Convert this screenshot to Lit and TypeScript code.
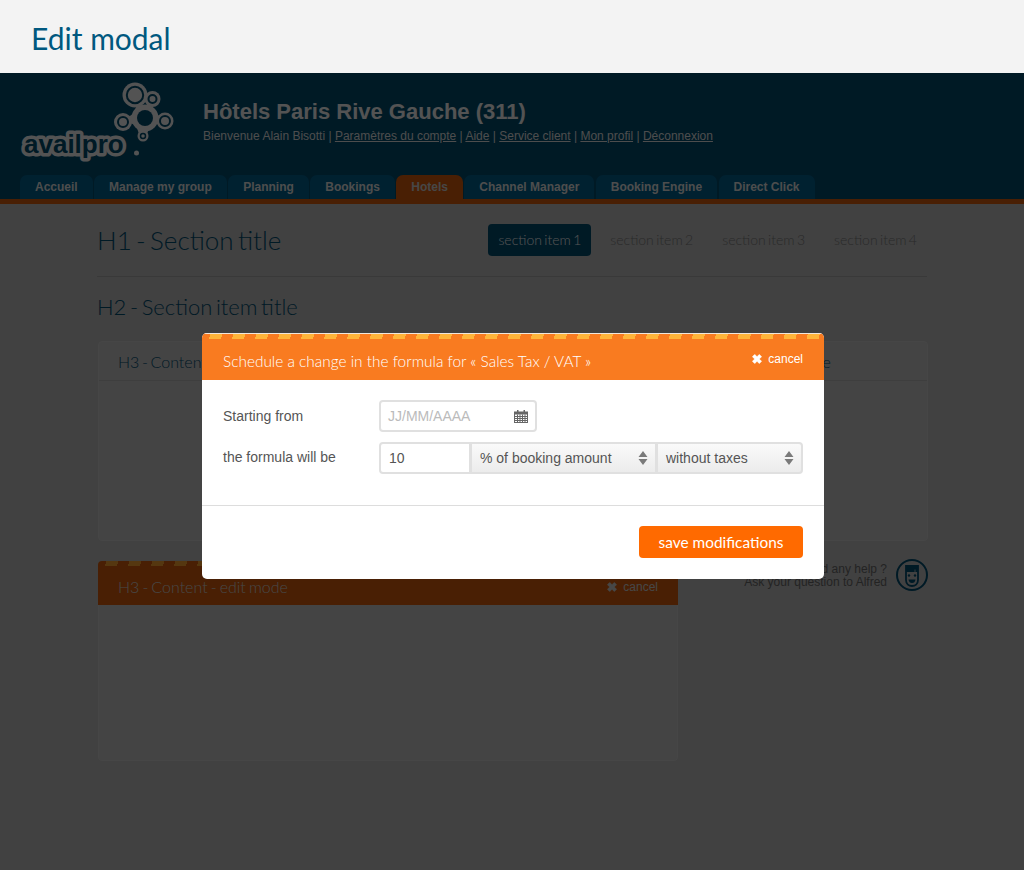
import { LitElement, html, css } from "lit";
import { customElement } from "lit/decorators.js";

const tabs = ["Accueil", "Manage my group", "Planning", "Bookings", "Hotels", "Channel Manager", "Booking Engine", "Direct Click"];
const links = ["Paramètres du compte", "Aide", "Service client", "Mon profil", "Déconnexion"];

const xIcon = html`<svg class="x" viewBox="0.6 0.6 8.8 8.8" aria-hidden="true"><path d="M1 3 3 1 5 3 7 1 9 3 7 5 9 7 7 9 5 7 3 9 1 7 3 5Z" fill="currentColor" stroke="currentColor" stroke-width=".6" stroke-linejoin="round"/></svg>`;

const updown = html`<svg class="updown" viewBox="0 0 10 14" aria-hidden="true"><path d="M5 0 9.500 6H.5ZM5 14 .5 8h9Z" fill="#7a7a7a"/></svg>`;

@customElement("app-root")
export class AppRoot extends LitElement {
  static styles = css`
    :host { display: block; width: 1024px; height: 870px; overflow: hidden; font-family: "Liberation Sans", Arial, sans-serif; background: #bababa; }
    .band { height: 73px; background: #f3f3f3; display: flex; align-items: center; padding-left: 31px; box-sizing: border-box; }
    .band h1 { margin: 0; font: 400 30px/1 Lato, sans-serif; color: #00587f; position: relative; top: 1px; }
    .page { position: relative; height: 797px; }
    .overlay { position: absolute; inset: 0; background: rgba(0,0,0,.65); }

    .top { height: 126px; background: #004a6c; border-bottom: 5px solid #d05a0c; display: flex; flex-direction: column; }
    .brand { flex: 1; display: flex; align-items: flex-start; }
    .logo { width: 203px; height: 100px; flex: none; }
    .logo text { font: 700 26px "Liberation Sans", sans-serif; fill: #004a6c; stroke: #eee; stroke-width: 7px; paint-order: stroke; stroke-linejoin: round; }
    .hotel { padding-top: 25px; }
    .hotel h2 { margin: 0; font: 700 22px/28px "Liberation Sans", sans-serif; color: #eee; }
    .hotel p { margin: 2px 0 0; font-size: 12px; line-height: 16px; color: #ddd; }
    .hotel a { color: #ddd; text-decoration: underline; }
    .tabs { display: flex; gap: 1.4px; padding-left: 20px; height: 24px; }
    .tab { padding: 0 15px; background: #005f8a; color: #ddd; font-size: 12px; font-weight: 700; line-height: 24px; border-radius: 7px 7px 0 0; }
    .tab.on { background: #d05a0c; color: #ccc; }

    .content { padding: 0 97px; }
    .head { display: flex; align-items: center; justify-content: space-between; height: 73px; padding-bottom: 1px; border-bottom: 1px solid #a4a4a4; box-sizing: border-box; }
    .head h1 { margin: 0; font: 300 26px/1 Lato, sans-serif; word-spacing: -2.7px; color: #004a6c; }
    .snav { display: flex; gap: 9px; }
    .snav span { font: 300 14px/32px Lato, sans-serif; word-spacing: -1.4px; padding: 0 10px; height: 32px; color: #787878; border-radius: 4px; }
    .snav span.on { background: #004a6c; color: #eee; }
    .h2 { margin: 15px 0 0; font: 300 22px/30px Lato, sans-serif; word-spacing: -2.4px; color: #004a6c; }

    .grid { display: grid; grid-template-columns: 580px 230px; column-gap: 20px; margin-top: 19px; padding-left: 1px; }
    .col { display: flex; flex-direction: column; gap: 20px; }
    .card { height: 200px; border: 1px solid #c8c8c8; border-radius: 4px; box-sizing: border-box; background: #c2c2c2; }
    .card .ct { height: 39px; border-bottom: 1px solid #b2b2b2; padding-left: 19px; font: 300 16px/40px Lato, sans-serif; word-spacing: -1.7px; color: #004a6c; box-sizing: border-box; }
    .edit { height: 200px; display: flex; flex-direction: column; border-radius: 4px; overflow: hidden; }
    .ebody { flex: 1; background: #c2c2c2; border: 1px solid #c8c8c8; border-top: 0; border-radius: 0 0 4px 4px; }
    .ehead { height: 44px; flex: none; background: #d05a0c; position: relative; display: flex; align-items: center; justify-content: space-between; padding: 7px 20px 0; box-sizing: border-box; color: #ccc; font: 300 16px Lato, sans-serif; word-spacing: -1.3px; }
    .stripes { position: absolute; left: 0; right: 0; top: 0; height: 5px; background: repeating-linear-gradient(105deg, transparent 0 8px, #ffb53a 8px 19.6px, transparent 19.6px 22.2px); }
    .ehead .stripes { opacity: .75; }
    .cancel { display: flex; align-items: center; gap: 6px; font: 400 12px "Liberation Sans", sans-serif; word-spacing: 0; }
    .x { width: 10px; height: 10px; }
    .help { display: flex; justify-content: flex-end; align-items: center; gap: 9px; font-size: 12px; line-height: 13px; color: #666; text-align: right; }
    .help svg { width: 32px; height: 32px; flex: none; margin-top: -2px; }

    .modal { position: absolute; left: 202px; top: 260px; width: 622px; height: 246px; background: #fff; border-radius: 5px; overflow: hidden; color: #555; display: flex; flex-direction: column; }
    .mhead { height: 47px; background: #f97b20; border-top: 1px solid #f0e6dc; position: relative; display: flex; align-items: center; justify-content: space-between; padding: 7px 21px 0; box-sizing: border-box; color: #fff; }
    .mhead h3 { margin: 0; font: 300 15.4px Lato, sans-serif; }
    .mhead .cancel { position: relative; top: -2px; }
    .mbody { padding: 20px 21px 0; height: 126px; box-sizing: border-box; border-bottom: 1px solid #ddd; display: flex; flex-direction: column; gap: 10px; }
    .row { display: flex; align-items: center; height: 32px; font-size: 14px; }
    .row label { width: 156px; flex: none; }
    .row + .row label { position: relative; top: -1px; }
    .ctrl { display: flex; height: 32px; border: 2px solid #e0e0e0; box-sizing: border-box; border-radius: 4px; align-items: center; background: #fff; color: #555; }
    .date { width: 158px; justify-content: space-between; padding: 0 7px; color: #bbb; }
    .date svg { width: 14px; height: 14px; }
    .group { display: flex; }
    .group .ctrl { border-radius: 0; margin-left: -1px; }
    .num { width: 92px; padding-left: 8px; border-radius: 4px 0 0 4px !important; margin-left: 0 !important; }
    .sel { padding: 0 7px 0 8px; justify-content: space-between; background: linear-gradient(#fafafa, #ececec); }
    .s1 { width: 187px; }
    .s2 { width: 147px; border-radius: 0 4px 4px 0 !important; }
    .updown { width: 10px; height: 14px; }
    .mfoot { flex: 1; display: flex; justify-content: flex-end; padding: 20px 21px 0; }
    .save { width: 164px; height: 32px; border: 0; border-radius: 4px; background: #ff6a00; color: #fff; font: 400 15.4px Lato, sans-serif; padding: 0; }
  `;

  render() {
    return html`
      <div class="band"><h1>Edit modal</h1></div>
      <div class="page">
        <div class="top">
          <div class="brand">
            <svg class="logo" viewBox="0 0 203 100" aria-hidden="true">
              <path d="M137 32 148 35 165 47 150 52 146 64 140 64 136 52 123 48 134 40Z" fill="#eee"/>
              <circle cx="135" cy="22" r="12.500" fill="#eee"/>
              <circle cx="135" cy="22" r="8.200" fill="none" stroke="#004a6c" stroke-width="2"/>
              <circle cx="152.500" cy="26" r="8" fill="#eee"/>
              <circle cx="152.500" cy="26" r="4" fill="none" stroke="#004a6c" stroke-width="2"/>
              <circle cx="123" cy="49" r="9" fill="#eee"/>
              <circle cx="123" cy="49" r="5" fill="none" stroke="#004a6c" stroke-width="2"/>
              <circle cx="165" cy="48" r="8.500" fill="#eee"/>
              <circle cx="165" cy="48" r="5" fill="none" stroke="#004a6c" stroke-width="2"/>
              <circle cx="143" cy="63" r="5.500" fill="#eee"/>
              <circle cx="143" cy="63" r="2.500" fill="none" stroke="#004a6c" stroke-width="1.500"/>
              <circle cx="145" cy="45" r="13.500" fill="#eee"/>
              <circle cx="145" cy="45" r="8" fill="#004a6c"/>
              <circle cx="136.500" cy="80" r="2.500" fill="#eee"/>
              <text x="24" y="80">availpro</text>
            </svg>
            <div class="hotel">
              <h2>Hôtels Paris Rive Gauche (311)</h2>
              <p>Bienvenue Alain Bisotti | ${links.map((l, i) => html`<a>${l}</a>${i < links.length - 1 ? " | " : ""}`)}</p>
            </div>
          </div>
          <div class="tabs">
            ${tabs.map((t) => html`<div class="tab ${t === "Hotels" ? "on" : ""}">${t}</div>`)}
          </div>
        </div>
        <div class="content">
          <div class="head">
            <h1>H1 - Section title</h1>
            <div class="snav">
              <span class="on">section item 1</span><span>section item 2</span><span>section item 3</span><span>section item 4</span>
            </div>
          </div>
          <div class="h2">H2 - Section item title</div>
          <div class="grid">
            <div class="col">
              <div class="card"><div class="ct">H3 - Content</div></div>
              <div class="edit">
                <div class="ehead"><div class="stripes"></div><span>H3 - Content - edit mode</span><span class="cancel">${xIcon}cancel</span></div>
                <div class="ebody"></div>
              </div>
            </div>
            <div class="col">
              <div class="card"><div class="ct">H3 - Sidebar title</div></div>
              <div class="help">
                <div>Need any help ?<br />Ask your question to Alfred</div>
                <svg viewBox="0 0 32 32" aria-hidden="true">
                  <circle cx="16" cy="16" r="15" fill="none" stroke="#004a6c" stroke-width="2"/>
                  <path d="M10 7H22V21C22 25 19 27 16 27S10 25 10 21Z" fill="none" stroke="#004a6c" stroke-width="1.800"/>
                  <path d="M10 7H22V13H10Z" fill="#004a6c"/>
                  <path d="M19 10.500V13" stroke="#bababa" stroke-width=".8"/>
                  <circle cx="13" cy="16.500" r="1.200" fill="#004a6c"/><circle cx="19" cy="16.500" r="1.200" fill="#004a6c"/>
                  <path d="M12.500 20.500H19.500Q19 24 16 24T12.500 20.500Z" fill="#004a6c"/>
                </svg>
              </div>
            </div>
          </div>
        </div>
        <div class="overlay"></div>
        <div class="modal">
          <div class="mhead"><div class="stripes"></div><h3>Schedule a change in the formula for « Sales Tax / VAT »</h3><span class="cancel">${xIcon}cancel</span></div>
          <div class="mbody">
            <div class="row"><label>Starting from</label>
              <div class="ctrl date">JJ/MM/AAAA
                <svg viewBox="0 0 14 14" aria-hidden="true"><path fill="#666" d="M0 2.500H3V1h1.500v1.500h5V1H11v1.500h3V14H0Zm1 3V13h12V5.500Z"/><path stroke="#666" stroke-width="1" d="M1 7.500h12M1 9.500h12M1 11.500h12M3.500 5.500V13M6 5.500V13M8.500 5.500V13M11 5.500V13"/></svg>
              </div>
            </div>
            <div class="row"><label>the formula will be</label>
              <div class="group">
                <div class="ctrl num">10</div>
                <div class="ctrl sel s1">% of booking amount ${updown}</div>
                <div class="ctrl sel s2">without taxes ${updown}</div>
              </div>
            </div>
          </div>
          <div class="mfoot"><button class="save">save modifications</button></div>
        </div>
      </div>
    `;
  }
}
